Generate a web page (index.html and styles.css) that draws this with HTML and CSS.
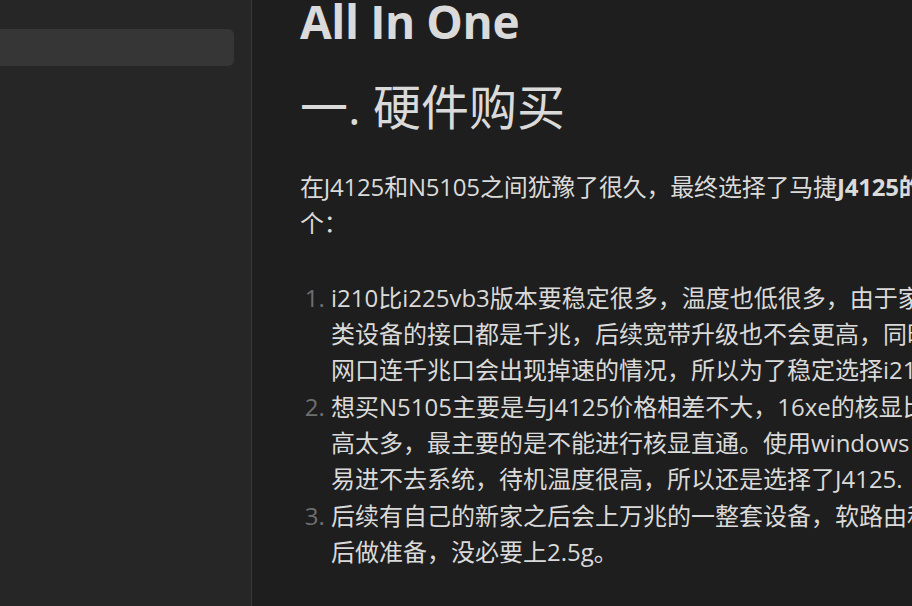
FILE: index.html
```html
<!DOCTYPE html>
<html lang="zh-CN">
<head>
<meta charset="utf-8">
<title>All In One</title>
<link rel="stylesheet" href="styles.css">
</head>
<body>
<div class="app">
  <aside class="sidebar">
    <div class="nav-item active"></div>
  </aside>
  <main class="pane">
    <article class="doc">
      <h1 class="title">All In One</h1>
      <h2 class="section">一. 硬件购买</h2>
      <p class="para">在J4125和N5105之间犹豫了很久，最终选择了马捷<strong>J4125的i210版本</strong>，原因有以下几<br>个：</p>
      <ol class="list">
        <li>i210比i225vb3版本要稳定很多，温度也低很多，由于家里的宽带只有千兆，各<br>类设备的接口都是千兆，后续宽带升级也不会更高，同时i225vb3的2.5g<br>网口连千兆口会出现掉速的情况，所以为了稳定选择i210版本。</li>
        <li>想买N5105主要是与J4125价格相差不大，16xe的核显比J4125的核显性能提升不<br>高太多，最主要的是不能进行核显直通。使用windows server直通后很容<br>易进不去系统，待机温度很高，所以还是选择了J4125.</li>
        <li>后续有自己的新家之后会上万兆的一整套设备，软路由和交换机都会升级，不用为以<br>后做准备，没必要上2.5g。</li>
      </ol>
    </article>
  </main>
</div>
</body>
</html>
```
FILE: styles.css
```css
html, body {
  margin: 0;
  padding: 0;
  height: 100%;
  background: #1e1e1e;
  overflow: hidden;
}

.app {
  display: flex;
  height: 606px;
  width: 912px;
  font-family: "Open Sans", "Noto Sans CJK SC", sans-serif;
}

.sidebar {
  flex: 0 0 251px;
  background: #262626;
  border-right: 1px solid #383838;
  padding-top: 29px;
  box-sizing: content-box;
}

.nav-item {
  width: 234px;
  height: 37px;
  border-radius: 0 6px 6px 0;
}

.nav-item.active {
  background: #363636;
}

.pane {
  flex: 1 1 auto;
  overflow: hidden;
  background: #1e1e1e;
}

.doc {
  width: 1000px;
  margin-top: -6px;
  padding-left: 48px;
  color: #dadada;
}

.title {
  margin: 0;
  font-size: 46px;
  font-weight: 700;
  line-height: 1.2;
  letter-spacing: -0.4px;
  color: #dadada;
}

.section {
  margin: 29px 0 0;
  font-size: 48px;
  font-weight: 400;
  line-height: 1.2;
  color: #dadada;
}

.para {
  margin: 33px 0 0;
  font-size: 24px;
  line-height: 36px;
  letter-spacing: -0.2px;
  color: #dadada;
}

.para strong {
  font-weight: 700;
}

.list {
  margin: 39px 0 0;
  padding-left: 31px;
  font-size: 24px;
  line-height: 36px;
  color: #dadada;
}

.list li {
  margin-bottom: 1px;
  padding-left: 0;
}

.list li::marker {
  color: #6e6e6e;
}
```
